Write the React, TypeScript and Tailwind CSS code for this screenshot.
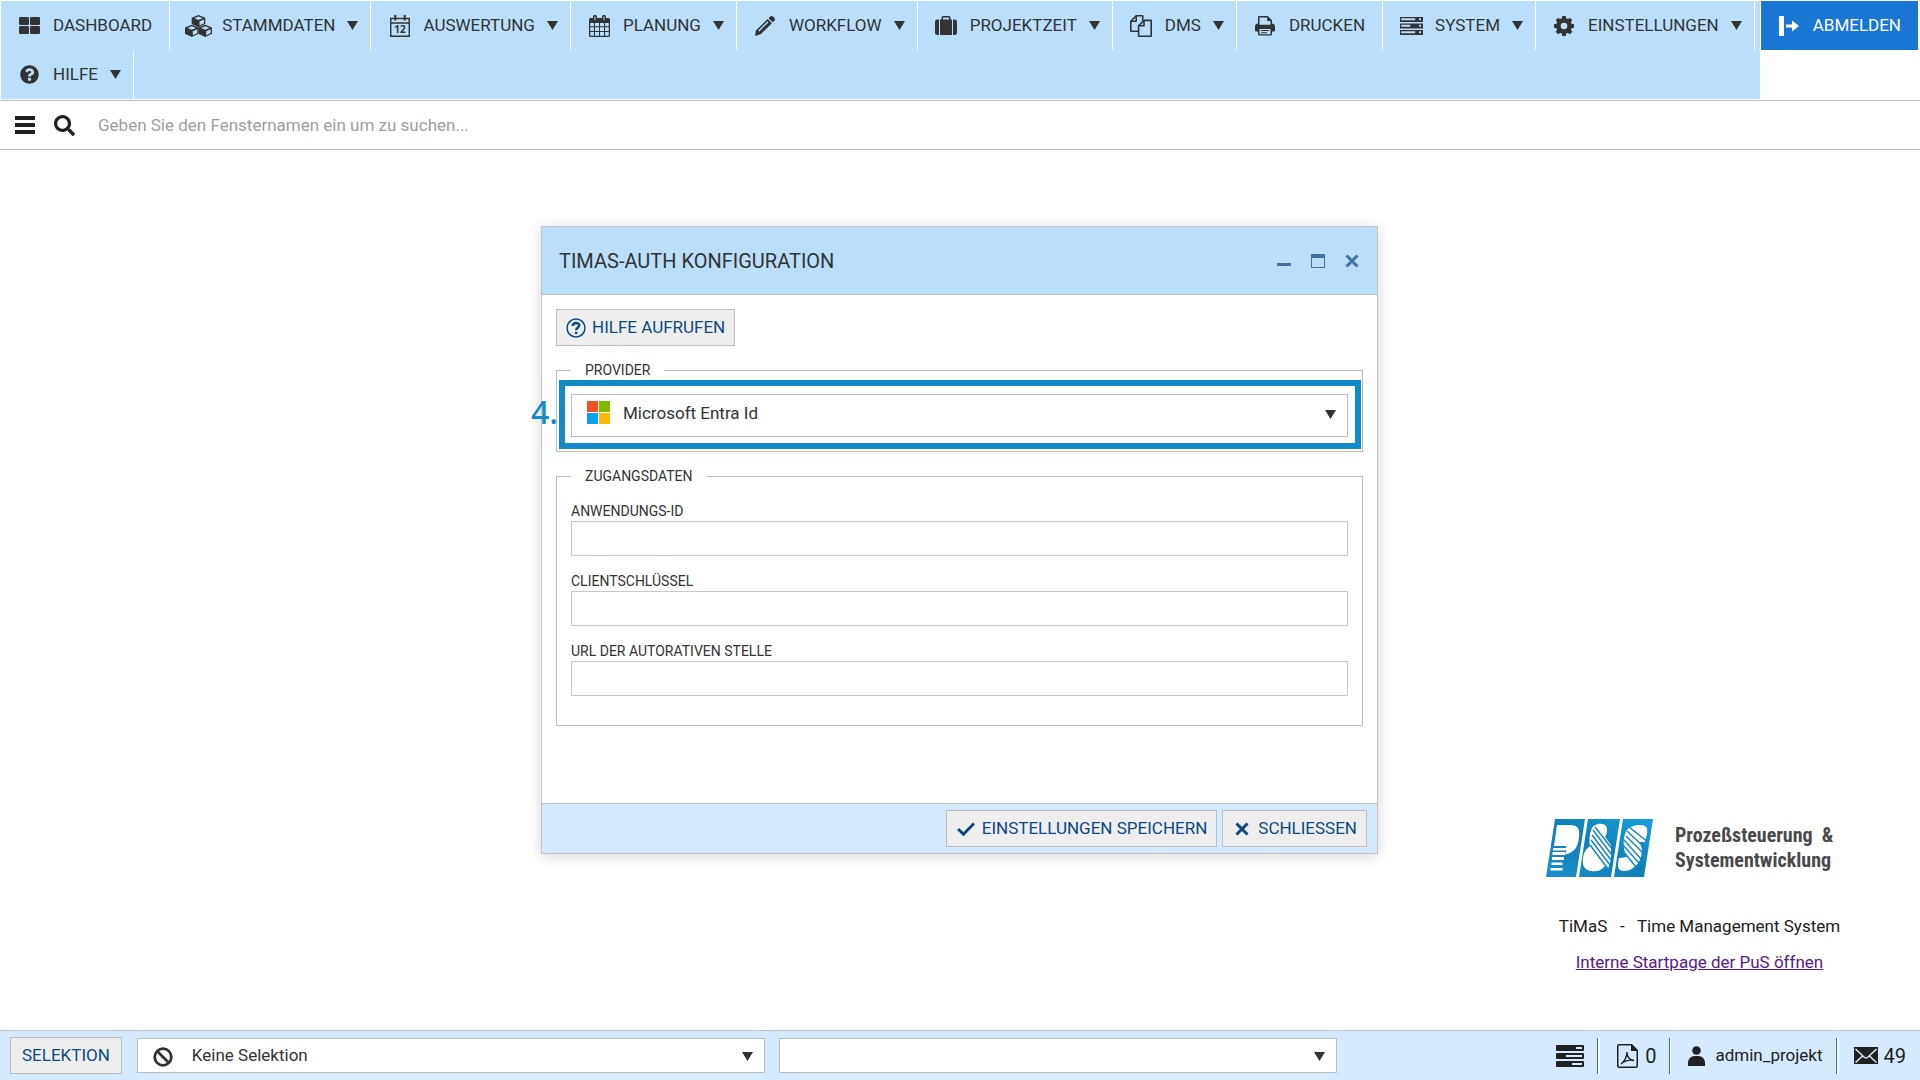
import React, { useState } from "react";
import { FaQuestionCircle, FaSearch } from "react-icons/fa";

type IconProps = {
  w: number;
  h: number;
  children: React.ReactNode;
};

function Icon({ w, h, children }: IconProps) {
  return (
    <svg
      width={w}
      height={h}
      viewBox={`0 0 ${w} ${h}`}
      fill="currentColor"
      aria-hidden="true"
      className="shrink-0"
    >
      {children}
    </svg>
  );
}

function Arrow() {
  return (
    <Icon w={11} h={9}>
      <path d="M0 0h11L5.5 9z" />
    </Icon>
  );
}

function DashboardIcon() {
  return (
    <Icon w={21} h={17}>
      <rect x="0" y="0" width="10" height="8" rx="1.3" />
      <rect x="11" y="0" width="10" height="8" rx="1.3" />
      <rect x="0" y="9" width="10" height="8" rx="1.3" />
      <rect x="11" y="9" width="10" height="8" rx="1.3" />
    </Icon>
  );
}

function Cube({ x, y }: { x: number; y: number }) {
  return (
    <g transform={`translate(${x} ${y})`}>
      <path d="M6.8 0 13.6 2.7V9L6.8 12.2 0 9V2.7z" />
      <path d="M6.8 1.5 11 3.2 6.8 5 2.6 3.2z" fill="#bbdefb" />
      <path d="M7.8 6.4 12.3 4.5V8.3L7.8 10.4z" fill="#bbdefb" />
    </g>
  );
}

function CubesIcon() {
  return (
    <Icon w={27} h={22}>
      <Cube x={6.7} y={0} />
      <Cube x={0} y={9.8} />
      <Cube x={13.4} y={9.8} />
    </Icon>
  );
}

function DateIcon() {
  return (
    <Icon w={20} h={22}>
      <path
        d="M.75 3.5h18.5v17.7H.75zM.75 8h18.5"
        fill="none"
        stroke="currentColor"
        strokeWidth="1.4"
      />
      <path d="M4.3 0h2v5.5h-2zM13.7 0h2v5.5h-2z" />
      <text
        x="10"
        y="18.2"
        textAnchor="middle"
        fontSize="10"
        fontWeight="700"
        fontFamily="Open Sans"
      >
        12
      </text>
    </Icon>
  );
}

function CalendarIcon() {
  return (
    <Icon w={21} h={22}>
      <path
        fillRule="evenodd"
        d="M1.5 3H4V1.6A1.6 1.6 0 0 1 5.6 0h.8A1.6 1.6 0 0 1 8 1.6V3h5V1.6A1.6 1.6 0 0 1 14.6 0h.8A1.6 1.6 0 0 1 17 1.6V3h2.5A1.5 1.5 0 0 1 21 4.5v16a1.5 1.5 0 0 1-1.5 1.5h-18A1.5 1.5 0 0 1 0 20.5v-16A1.5 1.5 0 0 1 1.5 3zM5.5 1.5V5h1V1.5zM14.5 1.5V5h1V1.5zM1.3 8v3.3h3.6V8zM6 8v3.3h4V8zM11 8v3.3h4V8zM16.1 8v3.3h3.6V8zM1.3 12.3v3.7h3.6v-3.7zM6 12.3v3.7h4v-3.7zM11 12.3v3.7h4v-3.7zM16.1 12.3v3.7h3.6v-3.7zM1.3 17v3.7h3.6V17zM6 17v3.7h4V17zM11 17v3.7h4V17zM16.1 17v3.7h3.6V17z"
      />
    </Icon>
  );
}

function PencilIcon() {
  return (
    <Icon w={20} h={20}>
      <path
        fillRule="evenodd"
        d="M15.3.6a1.8 1.8 0 0 1 2.6 0l1.5 1.5a1.8 1.8 0 0 1 0 2.6l-1.7 1.6-4.1-4.1zM12.7 3.1l4.2 4.2L5.7 18.3 0 20l.9-5.6zM12.5 5.3 3.3 14.5l1 1 9.2-9.2z"
      />
    </Icon>
  );
}

function SuitcaseIcon() {
  return (
    <Icon w={22} h={20}>
      <path
        fillRule="evenodd"
        d="M5 3.5h1.5V1.5A1.5 1.5 0 0 1 8 0h6a1.5 1.5 0 0 1 1.5 1.5v2H17V19H5zM8 1.4v2.1h6V1.4z"
      />
      <path d="M4 3.5V19H2.5A2.5 2.5 0 0 1 0 16.5V6a2.5 2.5 0 0 1 2.5-2.5zM18 3.5h1.5A2.5 2.5 0 0 1 22 6v10.5a2.5 2.5 0 0 1-2.5 2.5H18z" />
    </Icon>
  );
}

function FilesIcon() {
  return (
    <Icon w={22} h={22}>
      <g fill="none" stroke="currentColor" strokeWidth="1.6" strokeLinejoin="round">
        <path d="M8 16.2H.8V6.2L6.2.8h6.5v5" />
        <path d="M6.2.8v5.4H.8" />
        <path d="M21.2 5.4v15.8H8.6V10.8L14 5.4z" />
        <path d="M14 5.4v5.4H8.6" />
      </g>
    </Icon>
  );
}

function PrinterIcon() {
  return (
    <Icon w={20} h={20}>
      <path
        fillRule="evenodd"
        d="M3 7.5V1.2C3 .5 3.5 0 4.2 0h8.6L17 4.2v3.3c1.7 0 3 1.2 3 2.9v4.4c0 .5-.3.7-.7.7H17v2.8c0 .7-.5 1.2-1.2 1.2H4.2c-.7 0-1.2-.5-1.2-1.2v-2.8H.7c-.4 0-.7-.2-.7-.7v-4.4c0-1.7 1.3-2.9 3-2.9zM4.5 1.4v7.3h11V5h-3.3V1.4zM4.5 13v5.2h11V13z"
      />
      <path d="M6 14h8v1H6zM6 16.2h6v1H6z" />
    </Icon>
  );
}

function ServerIcon() {
  return (
    <Icon w={23} h={18}>
      <path
        fillRule="evenodd"
        d="M0 0h23v5H0zM1.2 1.3v2h14v-2zM19 1.3v2h2v-2zM0 6.5h23v5H0zM1.2 7.8v2h9v-2zM19 7.8v2h2v-2zM0 13h23v5H0zM1.2 14.3v2h14v-2zM19 14.3v2h2v-2z"
      />
    </Icon>
  );
}

function GearIcon() {
  return (
    <Icon w={20} h={20}>
      <circle cx="10" cy="10" r="5.6" fill="none" stroke="currentColor" strokeWidth="4.6" />
      {[0, 45, 90, 135].map((deg) => (
        <path
          key={deg}
          d="M7.8 3 8.2 0h3.6l.4 3zM7.8 17l.4 3h3.6l.4-3z"
          transform={`rotate(${deg} 10 10)`}
        />
      ))}
    </Icon>
  );
}

function LogoutIcon() {
  return (
    <Icon w={20} h={20}>
      <path d="M0 0h5v20H0zM7 8.5h6V4.5l7 5.5-7 5.5v-4H7z" />
    </Icon>
  );
}

type MenuItem = {
  label: string;
  icon: React.ReactNode;
  sub?: boolean;
};

const menu: MenuItem[] = [
  { label: "DASHBOARD", icon: <DashboardIcon /> },
  { label: "STAMMDATEN", icon: <CubesIcon />, sub: true },
  { label: "AUSWERTUNG", icon: <DateIcon />, sub: true },
  { label: "PLANUNG", icon: <CalendarIcon />, sub: true },
  { label: "WORKFLOW", icon: <PencilIcon />, sub: true },
  { label: "PROJEKTZEIT", icon: <SuitcaseIcon />, sub: true },
  { label: "DMS", icon: <FilesIcon />, sub: true },
  { label: "DRUCKEN", icon: <PrinterIcon /> },
  { label: "SYSTEM", icon: <ServerIcon />, sub: true },
  { label: "EINSTELLUNGEN", icon: <GearIcon />, sub: true },
  { label: "HILFE", icon: <FaQuestionCircle size={19} />, sub: true },
];

function Header() {
  return (
    <header className="flex items-start gap-px pl-px pr-[2px] pt-px pb-px border-b border-[#bdbdbd]">
      <nav className="flex-1 flex flex-wrap bg-[#bbdefb]">
        {menu.map((item) => (
          <button
            key={item.label}
            type="button"
            className={`flex items-center h-[49px] pl-[15px] border-r border-white cursor-pointer ${
              item.sub ? "pr-3" : "pr-[17px]"
            }`}
          >
            <span className="w-[27px] mr-[10px] flex justify-center">
              {item.icon}
            </span>
            {item.label}
            {item.sub && (
              <span className="ml-3">
                <Arrow />
              </span>
            )}
          </button>
        ))}
      </nav>
      <button
        type="button"
        className="flex items-center h-[49px] pl-[18px] pr-[17px] gap-[14px] bg-[#1976d2] text-white cursor-pointer"
      >
        <LogoutIcon />
        ABMELDEN
      </button>
    </header>
  );
}

function SearchBar() {
  const [query, setQuery] = useState("");

  return (
    <div className="flex items-center h-[49px] pl-[15px] border-b border-[#bdbdbd] text-[#212121]">
      <button type="button" aria-label="Menü" className="cursor-pointer">
        <Icon w={20} h={18}>
          <path d="M0 0h20v4H0zM0 7h20v4H0zM0 14h20v4H0z" />
        </Icon>
      </button>
      <label htmlFor="suche" className="ml-[19px]" aria-label="Suche">
        <FaSearch size={21} />
      </label>
      <input
        id="suche"
        type="text"
        value={query}
        onChange={(e) => setQuery(e.target.value)}
        placeholder="Geben Sie den Fensternamen ein um zu suchen..."
        className="flex-1 ml-[23px] pt-0.5 outline-none placeholder:text-[#9e9e9e]"
      />
    </div>
  );
}

type ActionButtonProps = {
  icon?: React.ReactNode;
  children: React.ReactNode;
};

function ActionButton({ icon, children }: ActionButtonProps) {
  return (
    <button
      type="button"
      className={`flex items-center gap-[6px] h-[37px] border border-[#bdbdbd] bg-[#eeeeee] text-[#0d4883] cursor-pointer ${
        icon ? "px-[9px]" : "px-[11px]"
      }`}
    >
      {icon && <span className="w-5 flex justify-center">{icon}</span>}
      {children}
    </button>
  );
}

function CrossIcon() {
  return (
    <Icon w={14} h={14}>
      <path
        d="M1.5 1.5l11 11M12.5 1.5l-11 11"
        stroke="currentColor"
        strokeWidth="3"
      />
    </Icon>
  );
}

function CheckIcon() {
  return (
    <Icon w={18} h={14}>
      <path
        d="M1 7l5.5 5.2L17 1.5"
        fill="none"
        stroke="currentColor"
        strokeWidth="3"
      />
    </Icon>
  );
}

function HelpIcon() {
  return (
    <Icon w={20} h={20}>
      <circle cx="10" cy="10" r="9" fill="none" stroke="currentColor" strokeWidth="1.5" />
      <path
        d="M6.8 8C6.8 4 13.2 4 13.2 7.6c0 2.2-3.1 2.2-3.1 4.7"
        fill="none"
        stroke="currentColor"
        strokeWidth="2.4"
      />
      <path d="M8.8 13.8h2.6v2.3H8.8z" />
    </Icon>
  );
}

function Field({ id, label }: { id: string; label: string }) {
  return (
    <div>
      <label htmlFor={id} className="block text-sm leading-5">
        {label}
      </label>
      <input
        id={id}
        type="text"
        className="block w-full h-[35px] px-2 border border-[#c8c8c8] outline-none"
      />
    </div>
  );
}

function AuthDialog() {
  return (
    <section
      role="dialog"
      aria-labelledby="dialog-titel"
      className="mt-[76px] w-[837px] self-start border border-[#c4c4c4] bg-white shadow-[0_2px_14px_rgba(0,0,0,0.16)]"
    >
      <div className="flex items-center h-[68px] pl-[17px] pr-[18px] bg-[#bbdefb] border-b border-[#bdbdbd]">
        <h1 id="dialog-titel" className="flex-1 text-xl">
          TIMAS-AUTH KONFIGURATION
        </h1>
        <div className="flex gap-5 text-[#4273a8]">
          <button type="button" aria-label="Minimieren" className="cursor-pointer">
            <Icon w={14} h={14}>
              <path d="M0 9h14v3H0z" />
            </Icon>
          </button>
          <button type="button" aria-label="Maximieren" className="cursor-pointer">
            <Icon w={14} h={14}>
              <path fillRule="evenodd" d="M0 0h14v14H0zM1 4v9h12V4z" />
            </Icon>
          </button>
          <button type="button" aria-label="Fenster schließen" className="cursor-pointer">
            <CrossIcon />
          </button>
        </div>
      </div>

      <div className="px-[14px] pt-[14px] pb-[77px]">
        <ActionButton icon={<HelpIcon />}>HILFE AUFRUFEN</ActionButton>

        <fieldset className="mt-[14px] px-[14px] pt-[14px] pb-[14px] border border-[#bdbdbd]">
          <legend className="px-[14px] text-sm leading-5">PROVIDER</legend>
          <div className="relative">
            <select
              aria-label="Provider"
              className="block appearance-none w-full h-[43px] pl-[51px] pb-1 border border-[#bdbdbd] bg-white outline-none"
            >
              <option>Microsoft Entra Id</option>
            </select>
            <div className="absolute left-4 top-[7px] pointer-events-none">
              <Icon w={23} h={23}>
                <path d="M0 0h11v11H0z" fill="#f25022" />
                <path d="M12 0h11v11H12z" fill="#7fba00" />
                <path d="M0 12h11v11H0z" fill="#00a4ef" />
                <path d="M12 12h11v11H12z" fill="#ffb900" />
              </Icon>
            </div>
            <div className="absolute right-3 top-4 pointer-events-none">
              <Arrow />
            </div>
            {/* step marker */}
            <div className="absolute -left-3 -right-[13px] -top-[14px] -bottom-3 border-6 border-[#0f8bc8] pointer-events-none">
              <span className="absolute right-full top-1 mr-[7px] text-[32px] leading-[44px] font-medium text-[#0f8bc8] font-['Noto_Sans',sans-serif]">
                4.
              </span>
            </div>
          </div>
        </fieldset>

        <fieldset className="mt-[14px] px-[14px] pt-[15px] pb-[29px] border border-[#bdbdbd]">
          <legend className="px-[14px] text-sm leading-5">ZUGANGSDATEN</legend>
          <div className="flex flex-col gap-[15px]">
            <Field id="anwendung" label="ANWENDUNGS-ID" />
            <Field id="client" label="CLIENTSCHLÜSSEL" />
            <Field id="url" label="URL DER AUTORATIVEN STELLE" />
          </div>
        </fieldset>
      </div>

      <div className="flex items-center justify-end gap-[5px] h-[50px] pr-[10px] bg-[#d6eaff] border-t border-[#bdbdbd]">
        <ActionButton icon={<CheckIcon />}>EINSTELLUNGEN SPEICHERN</ActionButton>
        <ActionButton icon={<CrossIcon />}>SCHLIESSEN</ActionButton>
      </div>
    </section>
  );
}

function Logo() {
  return (
    <svg width="107" height="58" viewBox="0 0 107 58" role="img" aria-label="PuS">
      <defs>
        <linearGradient id="blau" x1="0" y1="1" x2="1" y2="0">
          <stop offset="0" stopColor="#1c8fcb" />
          <stop offset="0.5" stopColor="#0f7fb6" />
          <stop offset="1" stopColor="#18a0dc" />
        </linearGradient>
      </defs>
      <path
        fill="url(#blau)"
        d="M9 0h30l-9 58H0zM42 0h32l-9 58H33zM77 0h30l-9 58H68z"
      />
      {/* P */}
      <path
        fill="#fff"
        d="M11 6h13c8 0 10 4 9 12-1 10-5 16-13 17v-8H8z"
      />
      <path
        fill="#fff"
        d="M7 29h13v2.5H7zM6.5 33h13v3H6.5zM6 38h12v3H6zM5.5 43.5h11v2.5H5.5zM4.5 49h12v2.5H4.5z"
      />
      {/* & */}
      <path
        fill="#fff"
        d="M46 9c2-4 11-6 14-2 2 4 1 8-1 11l6 8v14l-3 10-3-3c-4 5-9 6-14 5-7-1-9-6-8-13 1-6 3-9 7-12-1-6-1-12 2-18z"
      />
      <g fill="none" stroke="#1489c2" strokeWidth="1.5">
        <path d="M49 8l18 23M47 11l19 25M46 16l19 25M45 21l19 25M44 26l18 24" />
      </g>
      {/* S */}
      <path
        fill="#fff"
        d="M79 15c2-7 8-9 16-9 6 0 7 4 6 9l-2 8h-5l2 8c0 8-4 15-9 18-4 3-9 4-13 2-3-2-2-7-1-12l8-1c-4-7-4-16-2-23z"
      />
      <g fill="none" stroke="#1489c2" strokeWidth="1.5">
        <path d="M83 8l19 15M81 12l18 17M80 17l17 17M78 21l17 19M77 26l16 18M77 32l13 16" />
      </g>
    </svg>
  );
}

function Branding() {
  return (
    <div className="justify-self-end self-end flex flex-col items-center w-[307px] mr-[66px] mb-[58px] text-[#212121]">
      <div className="flex w-full items-center gap-[22px]">
        <Logo />
        <p className="text-xl leading-[25px] font-bold text-[#4a4a4a] font-['Liberation_Sans_Narrow','Roboto_Condensed',Roboto,sans-serif] whitespace-pre">
          {"Prozeßsteuerung  &\nSystementwicklung"}
        </p>
      </div>
      <p className="mt-[39px] leading-5 whitespace-pre">
        {"TiMaS   -   Time Management System"}
      </p>
      <a href="#" className="mt-4 leading-5 text-[#551a8b] underline">
        Interne Startpage der PuS öffnen
      </a>
    </div>
  );
}

function StatusBar() {
  return (
    <footer className="flex items-center h-[50px] pl-[10px] pr-[14px] border-t border-[#bdbdbd] bg-[#d6eaff] text-[#212121]">
      <ActionButton>SELEKTION</ActionButton>

      <div className="relative ml-[15px] w-[628px]">
        <select
          aria-label="Selektion"
          className="block appearance-none w-full h-[35px] pl-[54px] border border-[#bdbdbd] bg-white text-[#333333] outline-none"
        >
          <option>Keine Selektion</option>
        </select>
        <div className="absolute left-4 top-[9px] pointer-events-none text-[#333333]">
          <Icon w={20} h={20}>
            <circle cx="10" cy="10" r="8.3" fill="none" stroke="currentColor" strokeWidth="2.8" />
            <path d="M4 4l12 12" stroke="currentColor" strokeWidth="2.8" />
          </Icon>
        </div>
        <div className="absolute right-3 top-[14px] pointer-events-none text-[#333333]">
          <Arrow />
        </div>
      </div>

      <div className="relative ml-[14px] w-[558px]">
        <select
          aria-label="Auswahl"
          className="block appearance-none w-full h-[35px] pl-4 border border-[#bdbdbd] bg-white outline-none"
        >
          <option></option>
        </select>
        <div className="absolute right-3 top-[14px] pointer-events-none text-[#333333]">
          <Arrow />
        </div>
      </div>

      <div className="ml-auto flex items-center h-9">
        <div className="pr-[13px]">
          <Icon w={28} h={22}>
            <path
              fillRule="evenodd"
              d="M1 0h26a1 1 0 0 1 1 1v4a1 1 0 0 1-1 1H1a1 1 0 0 1-1-1V1a1 1 0 0 1 1-1zM20 2v2h6V2zM1 8h26a1 1 0 0 1 1 1v4a1 1 0 0 1-1 1H1a1 1 0 0 1-1-1V9a1 1 0 0 1 1-1zM10 10v2h16v-2zM1 16h26a1 1 0 0 1 1 1v4a1 1 0 0 1-1 1H1a1 1 0 0 1-1-1v-4a1 1 0 0 1 1-1zM16 18v2h10v-2z"
            />
          </Icon>
        </div>
        <div className="flex items-center h-full pl-[19px] pr-[13px] border-l border-[#1976d2] shadow-[inset_2px_0_0_#fff] text-xl">
          <Icon w={21} h={24}>
            <path
              fillRule="evenodd"
              d="M2 0h13l6 6v16a2 2 0 0 1-2 2H2a2 2 0 0 1-2-2V2a2 2 0 0 1 2-2zM1.5 1.5v21h18V7H14V1.5z"
            />
            <path
              d="M4 20c3-2 6-7 6-12 0 5 3 8 7 8.5-4-1-9 0-13 3.5z"
              fill="none"
              stroke="currentColor"
              strokeWidth="1.3"
            />
          </Icon>
          <span className="ml-[7px]">0</span>
        </div>
        <div className="flex items-center h-full pl-[18px] pr-[13px] border-l border-[#1976d2] shadow-[inset_1px_0_0_#fff]">
          <Icon w={17} h={20}>
            <circle cx="8.5" cy="4.5" r="4.3" />
            <path d="M0 20v-3c0-4 3-7 6.5-7h4c3.5 0 6.5 3 6.5 7v3z" />
          </Icon>
          <span className="ml-[10px]">admin_projekt</span>
        </div>
        <div className="flex items-center h-full pl-[17px] border-l border-[#1976d2] shadow-[inset_2px_0_0_#fff] text-xl">
          <Icon w={24} h={17}>
            <path d="M0 0h24v17H0z" />
            <path
              d="M1.5 2l8.5 8c1.2 1.1 2.8 1.1 4 0l8.5-8M1.5 15.5l7-6.5M22.5 15.5l-7-6.5"
              fill="none"
              stroke="#d6eaff"
              strokeWidth="1.5"
            />
          </Icon>
          <span className="ml-[6px]">49</span>
        </div>
      </div>
    </footer>
  );
}

export default function App() {
  return (
    <div className="min-h-screen flex flex-col bg-white text-[17px] text-[#333333] font-[Roboto,sans-serif]">
      <Header />
      <SearchBar />
      <main className="flex-1 grid grid-cols-[1fr_auto_1fr] pr-px">
        <div />
        <AuthDialog />
        <Branding />
      </main>
      <StatusBar />
    </div>
  );
}
